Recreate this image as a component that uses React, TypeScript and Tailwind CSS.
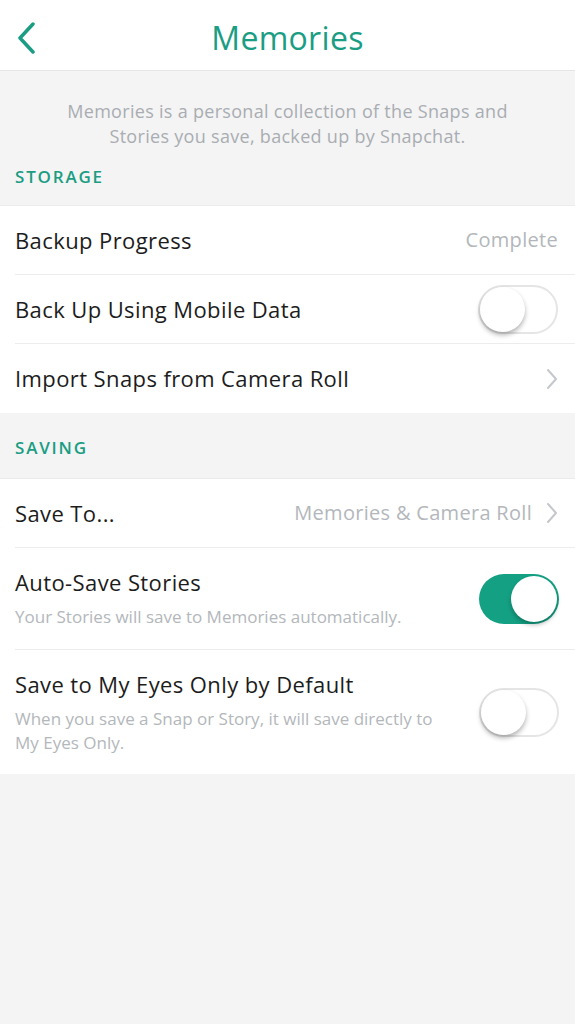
import React from 'react';

const Toggle: React.FC<{ on?: boolean }> = ({ on }) => {
  if (on) {
    return (
      <div className="w-[80px] h-[50px] rounded-full bg-[#14a083] flex items-center justify-end p-[2px] shrink-0">
        <div className="w-[46px] h-[46px] rounded-full bg-white shadow-[0_3px_4px_rgba(0,0,0,0.25)]" />
      </div>
    );
  }
  return (
    <div className="w-[80px] h-[49px] rounded-full bg-white border-2 border-[#e5e5e5] flex items-center shrink-0">
      <div className="w-[45px] h-[45px] rounded-full bg-white shadow-[0_3px_5px_rgba(0,0,0,0.3)]" />
    </div>
  );
};

const Chevron: React.FC = () => (
  <svg width="12" height="22" viewBox="0 0 12 22" className="shrink-0">
    <path d="M2 2 L10 11 L2 20" fill="none" stroke="#c4c7cb" strokeWidth="2" strokeLinecap="round" strokeLinejoin="round" />
  </svg>
);

const SectionLabel: React.FC<{ label: string }> = ({ label }) => (
  <div className="px-[15px] h-[36px] flex items-center text-[17px] font-semibold tracking-[1.8px] text-[#1a9d83]">
    {label}
  </div>
);

const Row: React.FC<{ title: string; last?: boolean; children?: React.ReactNode }> = ({ title, last, children }) => (
  <div className="pl-[15px]">
    <div className={`h-[69px] flex items-center justify-between pr-[17px] ${last ? '' : 'border-b border-[#ececec]'}`}>
      <span className="text-[22px] tracking-[0.4px] text-[#1c1c1c]">{title}</span>
      {children}
    </div>
  </div>
);

const App: React.FC = () => {
  return (
    <div className="min-h-[1024px] bg-[#f4f4f4] font-['Open_Sans',sans-serif]">
      <div className="h-[71px] pt-[5px] bg-white border-b border-[#e6e6e6] relative flex items-center justify-center">
        <svg width="20" height="32" viewBox="0 0 20 32" className="absolute left-[16px] top-[22px]">
          <path d="M17 2 L4 16 L17 30" fill="none" stroke="#1a9d83" strokeWidth="3.5" strokeLinecap="round" strokeLinejoin="round" />
        </svg>
        <span className="text-[32px] tracking-[0.3px] text-[#1a9d83] font-medium">Memories</span>
      </div>

      <p className="pt-[28px] pb-[10px] px-[50px] text-center text-[18px] tracking-[0.3px] leading-[25px] text-[#a9adb2]">
        Memories is a personal collection of the Snaps and Stories you save, backed up by Snapchat.
      </p>

      <SectionLabel label="STORAGE" />
      <div className="mt-[10px] bg-white border-t border-[#ebebeb]">
        <Row title="Backup Progress">
          <span className="text-[20px] tracking-[0.3px] text-[#b3b7bb]">Complete</span>
        </Row>
        <Row title="Back Up Using Mobile Data">
          <Toggle />
        </Row>
        <Row title="Import Snaps from Camera Roll" last>
          <Chevron />
        </Row>
      </div>

      <div className="pt-[17px] pb-[12px]">
        <SectionLabel label="SAVING" />
      </div>
      <div className="bg-white border-t border-[#ebebeb]">
        <Row title="Save To...">
          <div className="flex items-center gap-[14px]">
            <span className="text-[20px] tracking-[0.3px] text-[#b3b7bb]">Memories &amp; Camera Roll</span>
            <Chevron />
          </div>
        </Row>
        <div className="pl-[15px]">
          <div className="h-[102px] flex items-center justify-between pr-[16px] border-b border-[#ececec]">
            <div className="flex flex-col">
              <span className="text-[22px] tracking-[0.4px] text-[#1c1c1c] leading-[28px]">Auto-Save Stories</span>
              <span className="mt-[9px] text-[17px] text-[#b3b7bb] leading-[24px]">Your Stories will save to Memories automatically.</span>
            </div>
            <Toggle on />
          </div>
        </div>
        <div className="pl-[15px]">
          <div className="h-[124px] flex items-center justify-between pr-[16px]">
            <div className="flex flex-col w-[435px]">
              <span className="text-[22px] tracking-[0.4px] text-[#1c1c1c] leading-[28px]">Save to My Eyes Only by Default</span>
              <span className="mt-[9px] text-[17px] text-[#b3b7bb] leading-[24px]">When you save a Snap or Story, it will save directly to My Eyes Only.</span>
            </div>
            <Toggle />
          </div>
        </div>
      </div>
    </div>
  );
};

export default App;
